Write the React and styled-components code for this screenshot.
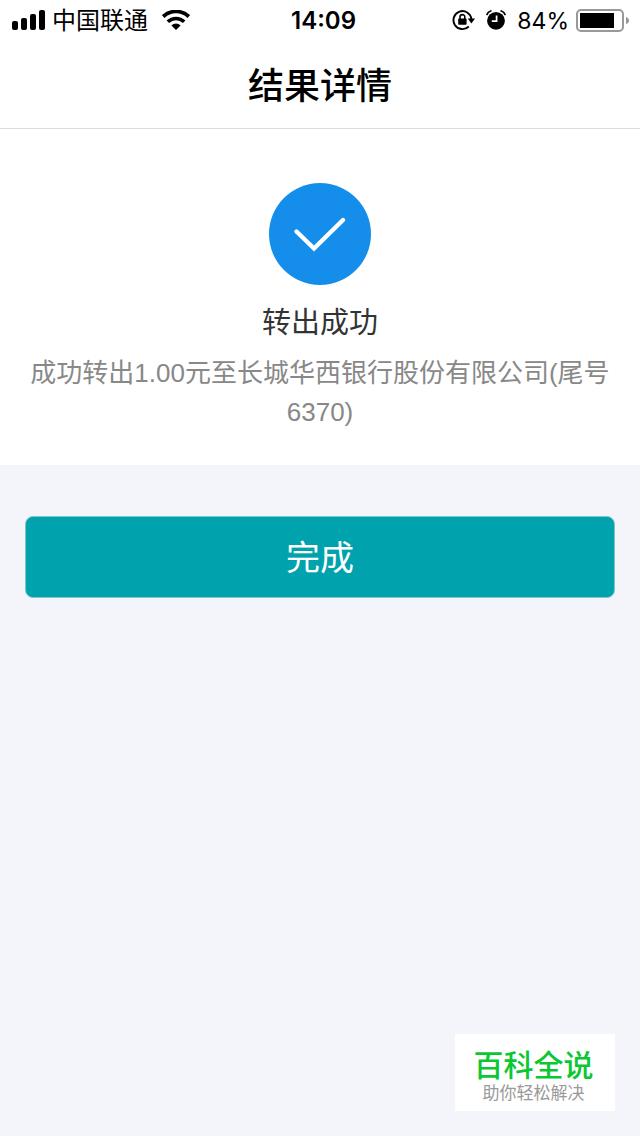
import React from 'react';
import styled, { createGlobalStyle } from 'styled-components';

const GlobalStyle = createGlobalStyle`
  * {
    box-sizing: border-box;
  }

  body {
    margin: 0;
    background-color: #f4f4fb;
    color: #000;
    font-family: "Liberation Sans", "Noto Sans CJK SC", sans-serif;
  }
`;

const Page = styled.div`
  display: flex;
  flex-direction: column;
  min-height: 100vh;
`;

const StatusBar = styled.div`
  display: grid;
  grid-template-columns: 1fr auto 1fr;
  align-items: center;
  height: 40px;
  padding: 0 11px;
  background-color: #fff;
  font-family: Inter, "Noto Sans CJK SC", sans-serif;
  font-size: 24px;
  line-height: 30px;
`;

const StatusGroup = styled.div`
  display: flex;
  align-items: center;
  justify-content: ${({ $end }) => ($end ? 'flex-end' : 'flex-start')};
  gap: ${({ $end }) => ($end ? 11 : 14)}px;
`;

const Label = styled.div`
  display: flex;
  align-items: center;
  gap: 7px;
`;

const StatusText = styled.span`
  padding-top: 2px;
`;

const Percent = styled(StatusText)`
  font-size: 23px;
`;

const Time = styled.time`
  padding: 2px 0 0 7px;
  font-weight: 600;
`;

const Header = styled.header`
  display: flex;
  align-items: center;
  justify-content: center;
  height: 89px;
  padding-top: 5px;
  border-bottom: 1px solid #dcdcdc;
  background-color: #fff;
`;

const Title = styled.h1`
  margin: 0;
  font-size: 36px;
  font-weight: 500;
  line-height: 54px;
`;

const Result = styled.section`
  display: flex;
  flex-direction: column;
  align-items: center;
  padding: 54px 24px 33px;
  background-color: #fff;
  text-align: center;
`;

const ResultTitle = styled.h2`
  margin: 18px 0 10px;
  color: #333;
  font-size: 29px;
  font-weight: 400;
  line-height: 41px;
`;

const ResultText = styled.p`
  margin: 0;
  color: #888;
  font-size: 26px;
  line-height: 39px;
`;

const Actions = styled.div`
  padding: 51px 25px;
`;

const Button = styled.button`
  display: block;
  width: 100%;
  height: 82px;
  padding: 0 0 3px;
  border: 1px solid #7cc8cf;
  border-radius: 8px;
  background-color: #00a3ad;
  color: #fff;
  font-family: inherit;
  font-size: 34px;
`;

const Watermark = styled.aside`
  position: fixed;
  right: 25px;
  bottom: 25px;
  width: 160px;
  height: 77px;
  padding: 13px 3px 0 0;
  background-color: #fff;
  text-align: center;
`;

const WatermarkName = styled.div`
  color: #0bc832;
  font-size: 30px;
  font-weight: 500;
  line-height: 38px;
`;

const WatermarkSlogan = styled.div`
  color: #999;
  font-size: 17px;
  line-height: 18px;
`;

const SignalIcon = () => (
  <svg width="34" height="20" viewBox="0 0 34 20" aria-hidden="true">
    <rect x="1" y="11" width="6" height="9" rx="2" />
    <rect x="10" y="8" width="6" height="12" rx="2" />
    <rect x="19" y="4" width="6" height="16" rx="2" />
    <rect x="28" y="0" width="6" height="20" rx="2" />
  </svg>
);

const WifiIcon = () => (
  <svg width="28" height="20" viewBox="0 0 28 20" aria-hidden="true">
    <path d="M1.2 6.6a18.5 18.5 0 0 1 25.6 0" fill="none" stroke="#000" strokeWidth="3.8" />
    <path d="M5.8 11.8a11.8 11.8 0 0 1 16.4 0" fill="none" stroke="#000" strokeWidth="3.6" />
    <path d="M9.4 15.4a6.6 6.6 0 0 1 9.2 0L14 20z" />
  </svg>
);

const RotationLockIcon = () => (
  <svg width="23" height="22" viewBox="0 0 23 22" aria-hidden="true">
    <path d="M16.8 17.5a9 9 0 1 1 2.6-7.5" fill="none" stroke="#000" strokeWidth="1.9" />
    <path d="M15.8 9.6h7.2l-3.6 4.8z" />
    <rect x="6.2" y="9.6" width="8.4" height="6.2" rx="0.8" />
    <path d="M8 10V8a2.4 2.4 0 0 1 4.8 0v2" fill="none" stroke="#000" strokeWidth="1.6" />
  </svg>
);

const AlarmIcon = () => (
  <svg width="20" height="20" viewBox="0 0 20 20" aria-hidden="true">
    <circle cx="10" cy="10.8" r="8.9" />
    <path d="M1 4.4Q1.8 1.8 4.8 1M19 4.4Q18.2 1.8 15.2 1" fill="none" stroke="#000" strokeWidth="1.8" strokeLinecap="round" />
    <path d="M10.6 5.6v5.6H5.8" fill="none" stroke="#fff" strokeWidth="1.7" />
  </svg>
);

const BatteryIcon = () => (
  <svg width="53" height="24" viewBox="0 0 53 24" aria-hidden="true">
    <rect x="1" y="2" width="46" height="21" rx="4" fill="#fff" stroke="#999" strokeWidth="2" />
    <rect x="4" y="5" width="34" height="15" />
    <path d="M50 9q3 1 3 3.5t-3 3.5z" fill="#999" />
  </svg>
);

const SuccessIcon = () => (
  <svg width="102" height="102" viewBox="0 0 102 102" aria-hidden="true">
    <circle cx="51" cy="51" r="51" fill="#148eea" />
    <path
      d="M27.5 48.5 45 65.5 74 37"
      fill="none"
      stroke="#fff"
      strokeWidth="4.4"
      strokeLinecap="round"
    />
  </svg>
);

const App = () => {
  return (
    <Page>
      <GlobalStyle />
      <StatusBar>
        <StatusGroup>
          <Label>
            <SignalIcon />
            <StatusText>中国联通</StatusText>
          </Label>
          <WifiIcon />
        </StatusGroup>
        <Time>14:09</Time>
        <StatusGroup $end>
          <RotationLockIcon />
          <AlarmIcon />
          <Label>
            <Percent>84%</Percent>
            <BatteryIcon />
          </Label>
        </StatusGroup>
      </StatusBar>
      <Header>
        <Title>结果详情</Title>
      </Header>
      <main>
        <Result>
          <SuccessIcon />
          <ResultTitle>转出成功</ResultTitle>
          <ResultText>
            成功转出1.00元至长城华西银行股份有限公司(尾号6370)
          </ResultText>
        </Result>
        <Actions>
          <Button type="button">完成</Button>
        </Actions>
      </main>
      <Watermark>
        <WatermarkName>百科全说</WatermarkName>
        <WatermarkSlogan>助你轻松解决</WatermarkSlogan>
      </Watermark>
    </Page>
  );
};

export default App;
